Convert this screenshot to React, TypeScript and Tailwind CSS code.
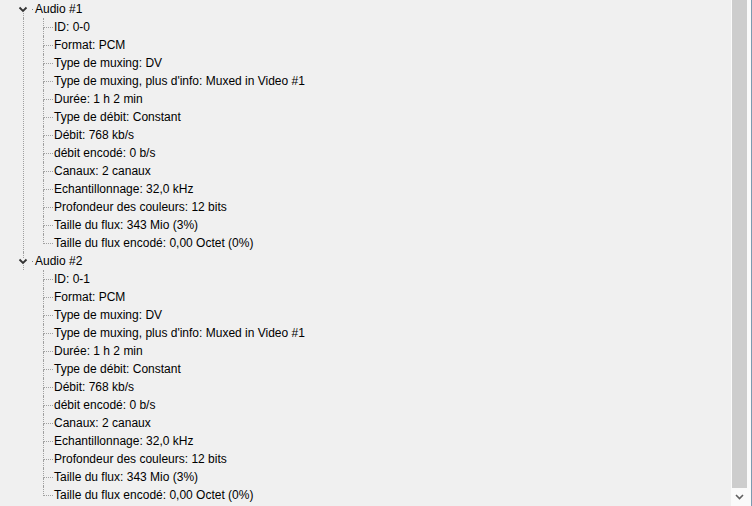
import React from "react";

const groups = [
  {
    title: "Audio #1",
    items: [
      "ID: 0-0",
      "Format: PCM",
      "Type de muxing: DV",
      "Type de muxing, plus d'info: Muxed in Video #1",
      "Durée: 1 h 2 min",
      "Type de débit: Constant",
      "Débit: 768 kb/s",
      "débit encodé: 0 b/s",
      "Canaux: 2 canaux",
      "Echantillonnage: 32,0 kHz",
      "Profondeur des couleurs: 12 bits",
      "Taille du flux: 343 Mio (3%)",
      "Taille du flux encodé: 0,00 Octet (0%)",
    ],
  },
  {
    title: "Audio #2",
    items: [
      "ID: 0-1",
      "Format: PCM",
      "Type de muxing: DV",
      "Type de muxing, plus d'info: Muxed in Video #1",
      "Durée: 1 h 2 min",
      "Type de débit: Constant",
      "Débit: 768 kb/s",
      "débit encodé: 0 b/s",
      "Canaux: 2 canaux",
      "Echantillonnage: 32,0 kHz",
      "Profondeur des couleurs: 12 bits",
      "Taille du flux: 343 Mio (3%)",
      "Taille du flux encodé: 0,00 Octet (0%)",
    ],
  },
];

function Chevron() {
  return (
    <svg width="10" height="7" viewBox="0 0 10 7" className="block">
      <polyline points="1.5,1.5 5,5 8.5,1.5" fill="none" stroke="#333333" strokeWidth="1.8" />
    </svg>
  );
}

export default function App() {
  return (
    <div
      className="w-[752px] h-[506px] bg-[#f0f0f0] flex overflow-hidden text-black text-[12px] leading-[18px]"
      style={{ fontFamily: '"Liberation Sans", Arial, sans-serif' }}
    >
      <div className="w-[731px] h-full overflow-hidden flex flex-col">
        {groups.map((g, gi) => {
          const lastGroup = gi === groups.length - 1;
          return (
            <div key={gi} className="flex flex-col">
              <div className="flex items-center h-[18px]">
                <div className="w-[18px] h-full" />
                <div className="w-[10px] h-full flex flex-col">
                  <div className={gi === 0 ? "h-[6px]" : "h-[6px] ml-[5px] border-l border-dotted border-[#a0a0a0]"} />
                  <Chevron />
                  <div className="flex-1 ml-[5px] border-l border-dotted border-[#a0a0a0]" />
                </div>
                <div className="ml-[4px] w-[1px] h-[1px] bg-[#808080]" />
                <span className="ml-[2px] whitespace-nowrap">{g.title}</span>
              </div>
              <div
                className={
                  lastGroup
                    ? "ml-[23px] pl-[20px] flex flex-col"
                    : "ml-[23px] pl-[19px] flex flex-col border-l border-dotted border-[#a0a0a0]"
                }
              >
                {g.items.map((it, i) => {
                  const last = i === g.items.length - 1;
                  return (
                    <div key={i} className="flex h-[18px]">
                      <div className="w-[10px] h-full flex flex-col">
                        <div className="h-[10px] border-l border-b border-dotted border-[#a0a0a0]" />
                        {!last && <div className="flex-1 border-l border-dotted border-[#a0a0a0]" />}
                      </div>
                      <span className="ml-[1px] whitespace-nowrap">{it}</span>
                    </div>
                  );
                })}
              </div>
            </div>
          );
        })}
      </div>
      <div className="w-[21px] h-full flex bg-[#fafafa] border-r border-[#7b9bb0]">
        <div className="ml-[1px] w-[15px] h-full flex flex-col">
          <div className="h-[488px] bg-[#cdcdcd]" />
          <div className="flex-1 flex items-center justify-center">
            <svg width="9" height="6" viewBox="0 0 9 6" className="block">
              <polyline points="1,1 4.5,4.5 8,1" fill="none" stroke="#606060" strokeWidth="1.6" />
            </svg>
          </div>
        </div>
      </div>
    </div>
  );
}
